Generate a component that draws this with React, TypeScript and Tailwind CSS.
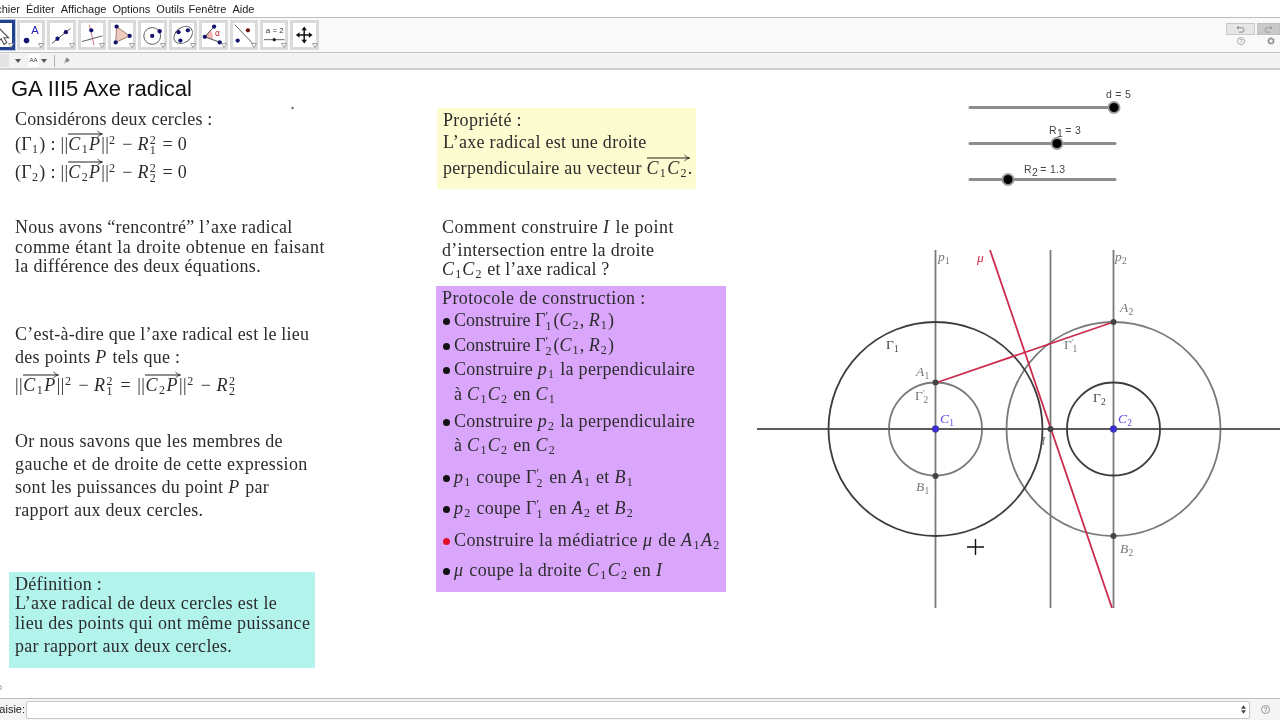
import React from "react";

const T = ({ c, children }: { c: string; children: React.ReactNode }) => (
  <p className={"absolute whitespace-nowrap leading-[20px] " + c}>{children}</p>
);
const I = ({ children }: { children: React.ReactNode }) => <i className="mr-[1px]">{children}</i>;
const Sb = ({ children }: { children: React.ReactNode }) => <sub className="text-[12px] not-italic -bottom-[3px] mr-[1px]">{children}</sub>;
const Stack = ({ top, n }: { top: string; n: string }) => (
  <span className="relative inline-block w-[8px] h-[1px]">
    <span className="absolute left-0 -top-[13px] text-[12px] leading-[9px]">{top}</span>
    <span className="absolute left-0 -top-[3px] text-[12px] leading-[9px]">{n}</span>
  </span>
);
const Vec = ({ children }: { children: React.ReactNode }) => (
  <span className="relative inline-block">
    {children}
    <svg className="absolute left-0 -top-[4px] w-[calc(100%+1px)] h-[8px] overflow-visible" aria-hidden="true">
      <line x1="0" y1="4" x2="100%" y2="4" stroke="#222" strokeWidth="1" />
    </svg>
    <svg className="absolute -right-[2px] -top-[4px] w-[6px] h-[8px]" viewBox="0 0 6 8" aria-hidden="true">
      <path d="M0.5 1 Q2.5 3.5 5.5 4 Q2.5 4.5 0.5 7" fill="none" stroke="#222" strokeWidth="0.9" />
    </svg>
  </span>
);
const Dot = ({ red }: { red?: boolean }) => (
  <span className={"inline-block w-[7px] h-[7px] rounded-full ml-[1px] mr-[4px] align-[1px] " + (red ? "bg-[#e0102a]" : "bg-[#111111]")} />
);
const C1 = () => <><I>C</I><Sb>1</Sb></>;
const C2 = () => <><I>C</I><Sb>2</Sb></>;
const Sq = () => <sup className="text-[12px] mr-[2px]">2</sup>;

const Icon = ({ children, selected }: { children: React.ReactNode; selected?: boolean }) => (
  <div className={"relative shrink-0 w-[28.4px] h-[30px] mr-[2px] border-[3px] " + (selected ? "bg-white border-[#23408f] outline outline-1 outline-[#b8c6e4]" : "bg-white border-[#dadada]")}>
    <svg viewBox="0 0 24 24" className="w-full h-full">{children}</svg>
    <svg viewBox="0 0 6 5" className="absolute right-[-2px] bottom-[-1px] w-[6px] h-[5px]">
      <path d="M0.5 0.5H5.5L3 4.5Z" fill="#ffffff" stroke="#8a8a8a" strokeWidth="0.8" />
    </svg>
  </div>
);
const P = ({ x, y, r = 2.3, f = "#14146e" }: { x: number; y: number; r?: number; f?: string }) => <circle cx={x} cy={y} r={r} fill={f} />;

const Toolbar = () => (
  <div className="flex items-center h-[35px] bg-[#f9f9f9] border-b border-[#c4c4c4] -ml-[13.5px] pr-0 shrink-0">
    <Icon selected>
      <path d="M8 3 L8 20 L12 16 L15 22 L18 20 L15 15 L20 15 Z" fill="#fff" stroke="#555" strokeWidth="1.2" />
    </Icon>
    <Icon>
      <P x={7} y={18} r={3} />
      <text x={12} y={11} fontSize="12" fontFamily="Liberation Sans" fill="#2424b4">A</text>
    </Icon>
    <Icon>
      <line x1="2" y1="21" x2="22" y2="5" stroke="#444" strokeWidth="1" />
      <P x={8} y={16} />
      <P x={17} y={9} />
    </Icon>
    <Icon>
      <line x1="9" y1="1" x2="14" y2="23" stroke="#d06a7a" strokeWidth="1" />
      <line x1="1" y1="19" x2="23" y2="13" stroke="#555" strokeWidth="1" />
      <P x={11} y={7} />
    </Icon>
    <Icon>
      <path d="M6 3 L20 13 L5 20 Z" fill="#eccabd" stroke="#8a5a50" strokeWidth="0.8" />
      <P x={6} y={3} />
      <P x={20} y={13} />
      <P x={5} y={20} />
    </Icon>
    <Icon>
      <circle cx="12" cy="13" r="9" fill="none" stroke="#555" strokeWidth="1" />
      <P x={12} y={13} />
      <P x={20} y={8} />
    </Icon>
    <Icon>
      <ellipse cx="12" cy="12" rx="11" ry="8" transform="rotate(-38 12 12)" fill="none" stroke="#555" strokeWidth="1" />
      <P x={7} y={9} />
      <P x={17} y={7} />
      <P x={9} y={18} />
    </Icon>
    <Icon>
      <path d="M3 14 L9 7 Q13 11 11 17 Z" fill="#f3b4b4" />
      <line x1="3" y1="14" x2="13" y2="3" stroke="#444" strokeWidth="1" />
      <line x1="3" y1="14" x2="20" y2="20" stroke="#444" strokeWidth="1" />
      <P x={3} y={14} />
      <P x={13} y={3} />
      <P x={19} y={20} />
      <text x={14} y={13} fontSize="9" fontFamily="Liberation Sans" fill="#c02020">α</text>
    </Icon>
    <Icon>
      <line x1="2" y1="1" x2="23" y2="23" stroke="#555" strokeWidth="1" />
      <P x={5} y={18} />
      <P x={16} y={7} f="#701010" />
    </Icon>
    <Icon>
      <text x={3} y={10} fontSize="8.5" fontFamily="Liberation Sans" fill="#333">a = 2</text>
      <line x1="1" y1="17" x2="23" y2="17" stroke="#555" strokeWidth="1" />
      <P x={12} y={17} r={1.8} f="#222" />
    </Icon>
    <Icon>
      <path d="M12 3 L15 7 H12.8 V11.2 H17 V9 L21 12 L17 15 V12.8 H12.8 V17 H15 L12 21 L9 17 H11.2 V12.8 H7 V15 L3 12 L7 9 V11.2 H11.2 V7 H9 Z" fill="#111" />
    </Icon>
    <div className="flex-1" />
    <div className="w-[29px] h-[12px] mr-[2px] -mt-[12px] bg-[#e6e6e6] border border-[#c8c8c8] flex items-center justify-center">
      <svg viewBox="0 0 10 8" className="w-[9px] h-[7px]"><path d="M1 2H7Q9 2 9 4.5T7 7H3M1 2L3 0.5M1 2L3 3.5" fill="none" stroke="#666" strokeWidth="0.8" /></svg>
    </div>
    <div className="w-[23px] h-[12px] -mt-[12px] bg-[#c9c9c9] border border-[#c0c0c0] flex items-center justify-center">
      <svg viewBox="0 0 10 8" className="w-[9px] h-[7px]"><path d="M9 2H3Q1 2 1 4.5T3 7H7M9 2L7 0.5M9 2L7 3.5" fill="none" stroke="#888" strokeWidth="0.8" /></svg>
    </div>
  </div>
);

const Graph = () => {
  const serif = "Liberation Serif";
  const lab = (x: number, y: number, name: string, sub: string | null, fill: string, italic = true, prime = false, size = 13.5) => (
    <text x={x} y={y} fill={fill} fontFamily={serif} fontSize={size} fontStyle={italic ? "italic" : "normal"}>
      {name}
      {prime ? <tspan fontSize="9" dy="-4">′</tspan> : null}
      {sub ? <tspan fontSize="9.5" dy={prime ? 7 : 3} dx={prime ? -2 : 0} fontStyle="normal">{sub}</tspan> : null}
    </text>
  );
  return (
    <svg className="absolute left-0 top-0 w-[1280px] h-[628px]" viewBox="0 70 1280 628">
      <g strokeLinecap="round" strokeWidth="3" stroke="#8c8c8c">
        <line x1="970" y1="107.5" x2="1114" y2="107.5" />
        <line x1="970" y1="143.5" x2="1115" y2="143.5" />
        <line x1="970" y1="179.5" x2="1115" y2="179.5" />
      </g>
      {[[1114, 107.5], [1057, 143.5], [1008, 179.5]].map(([x, y]) => (
        <g key={x}>
          <circle cx={x} cy={y} r="6.5" fill="#9a9a9a" />
          <circle cx={x} cy={y} r="4.6" fill="#000" />
        </g>
      ))}
      <g fontFamily="Liberation Sans" fontSize="10.5" fill="#444">
        <text x="1106" y="98">d = 5</text>
        <text x="1049" y="134">R<tspan dy="3">1</tspan><tspan dy="-3" dx="-1"> = 3</tspan></text>
        <text x="1024" y="173">R<tspan dy="3">2</tspan><tspan dy="-3" dx="-1"> = 1.3</tspan></text>
      </g>
      <circle cx="292.5" cy="108" r="1.2" fill="#666" />

      <g stroke="#7a7a7a" strokeWidth="1.8" fill="none">
        <line x1="935.5" y1="250" x2="935.5" y2="608" />
        <line x1="1050.5" y1="250" x2="1050.5" y2="608" />
        <line x1="1113.5" y1="250" x2="1113.5" y2="608" />
        <circle cx="935.5" cy="429" r="46.5" />
        <circle cx="1113.5" cy="429" r="107" />
      </g>
      <line x1="757" y1="429" x2="1280" y2="429" stroke="#5c5c5c" strokeWidth="1.8" />
      <g stroke="#3c3c3c" strokeWidth="1.8" fill="none">
        <circle cx="935.5" cy="429" r="107" />
        <circle cx="1113.5" cy="429" r="46.5" />
      </g>
      <g stroke="#cc2b4b" strokeWidth="1.8">
        <line x1="935.5" y1="383" x2="1113.5" y2="322" />
        <line x1="990" y1="250" x2="1112" y2="608" />
      </g>
      {[[935.5, 382.5], [935.5, 476], [1113.5, 322], [1113.5, 536], [1050.5, 429]].map(([x, y]) => (
        <circle key={x + "-" + y} cx={x} cy={y} r="3" fill="#444" />
      ))}
      <circle cx="935.5" cy="429" r="3.4" fill="#3a2fe0" stroke="#444" strokeWidth="0.5" />
      <circle cx="1113.5" cy="429" r="3.4" fill="#3a2fe0" stroke="#444" strokeWidth="0.5" />
      <path d="M967 547H984M975.5 539V555" stroke="#111" strokeWidth="1.4" />

      {lab(938, 261, "p", "1", "#777")}
      {lab(977, 262, "μ", null, "#cc2b4b")}
      {lab(1115, 261, "p", "2", "#777")}
      {lab(1120, 312, "A", "2", "#777")}
      {lab(886, 349, "Γ", "1", "#444", false)}
      {lab(1064, 349, "Γ", "1", "#777", false, true)}
      {lab(916, 376, "A", "1", "#777")}
      {lab(915, 400, "Γ", "2", "#777", false, true)}
      {lab(940, 423, "C", "1", "#5a4de8")}
      {lab(1093, 402, "Γ", "2", "#444", false)}
      {lab(1118, 423, "C", "2", "#5a4de8")}
      {lab(1041, 445, "I", null, "#777")}
      {lab(916, 491, "B", "1", "#777")}
      {lab(1120, 553, "B", "2", "#777")}
    </svg>
  );
};

export default function App() {
  return (
    <div className="w-[1280px] h-[720px] overflow-hidden flex flex-col bg-white blur-[0.35px] font-['Liberation_Sans',sans-serif] text-[#222222]">
      <div className="h-[18px] shrink-0 flex items-center gap-[6px] pt-[2px] -ml-[13px] text-[11px] text-[#222] border-b border-[#bdbdbd]">
        <span>Fichier</span>
        <span>Éditer</span>
        <span>Affichage</span>
        <span>Options</span>
        <span>Outils</span>
        <span className="-ml-[2px]">Fenêtre</span>
        <span>Aide</span>
      </div>
      <Toolbar />
      <div className="relative h-[17px] shrink-0 bg-[#f3f3f3] border-b-2 border-[#cfcfcf] flex items-center">
        <div className="w-[9px] h-[13px] bg-[#e4e4e4]" />
        <svg viewBox="0 0 6 4" className="w-[6px] h-[4px] ml-[6px]"><path d="M0 0H6L3 4Z" fill="#555" /></svg>
        <span className="ml-[7px] w-[11px] h-[13px] bg-white text-[6px] leading-[13px] text-center text-[#333]">AA</span>
        <svg viewBox="0 0 6 4" className="w-[6px] h-[4px] ml-[2px]"><path d="M0 0H6L3 4Z" fill="#555" /></svg>
        <span className="ml-[7px] w-px h-[12px] bg-[#b0b0b0]" />
        <svg viewBox="0 0 10 10" className="w-[9px] h-[9px] ml-[7px]"><path d="M5 1L9 5L7.5 5.5L5.5 7.5L5 6.5L1.5 9L4 5.5L3 5L5 2.5Z" fill="#8a8a8a" /></svg>
      </div>
      <div className="absolute left-[1237px] top-[37px] w-[8px] h-[8px] rounded-full border border-[#aaaaaa] text-[6px] leading-[6px] text-center text-[#888]">?</div>
      <svg viewBox="0 0 10 10" className="absolute left-[1267px] top-[37px] w-[8px] h-[8px]">
        <circle cx="5" cy="5" r="3" fill="none" stroke="#888" strokeWidth="1.6" />
        <circle cx="5" cy="5" r="4.4" fill="none" stroke="#888" strokeWidth="1" strokeDasharray="1.4 2" />
      </svg>

      <main className="relative flex-1 overflow-hidden bg-white font-['Liberation_Serif',serif] text-[18px] tracking-[0.3px] text-[#2c2c2c]">
        <div className="absolute left-[437px] top-[38px] w-[259px] h-[81px] bg-[#fdfbd0]" />
        <div className="absolute left-[436px] top-[216px] w-[290px] h-[306px] bg-[#d9a6fb]" />
        <div className="absolute left-[9px] top-[502px] w-[306px] h-[96px] bg-[#b2f3ec]" />
        <div className="absolute -left-[3px] top-[615px] w-[5px] h-[5px] rounded-full border border-[#999]" />
        <Graph />

        <h1 className="absolute left-[11px] top-[6px] font-['Liberation_Sans',sans-serif] text-[22px] leading-[26px] tracking-normal text-[#111]">GA III5 Axe radical</h1>

        <T c="left-[15px] top-[39px] tracking-[0.15px]">Considérons deux cercles :</T>
        <T c="left-[15px] top-[64px]">(Γ<Sb>1</Sb>) : ||<Vec><C1 /><I>P</I></Vec>||<Sq /> − <I>R</I><Stack top="2" n="1" /> = 0</T>
        <T c="left-[15px] top-[92px]">(Γ<Sb>2</Sb>) : ||<Vec><C2 /><I>P</I></Vec>||<Sq /> − <I>R</I><Stack top="2" n="2" /> = 0</T>

        <T c="left-[15px] top-[147px]">Nous avons “rencontré” l’axe radical</T>
        <T c="left-[15px] top-[167px] tracking-[0.45px]">comme étant la droite obtenue en faisant</T>
        <T c="left-[15px] top-[186px]">la différence des deux équations.</T>

        <T c="left-[15px] top-[254px] tracking-[0.25px]">C’est-à-dire que l’axe radical est le lieu</T>
        <T c="left-[15px] top-[277px]">des points <I>P</I> tels que :</T>
        <T c="left-[15px] top-[305px] tracking-[0.5px]">||<Vec><C1 /><I>P</I></Vec>||<Sq /> − <I>R</I><Stack top="2" n="1" /> <span className="mx-[1px]">=</span> ||<Vec><C2 /><I>P</I></Vec>||<Sq /> − <I>R</I><Stack top="2" n="2" /></T>

        <T c="left-[15px] top-[361px]">Or nous savons que les membres de</T>
        <T c="left-[15px] top-[384px] tracking-[0.38px]">gauche et de droite de cette expression</T>
        <T c="left-[15px] top-[407px]">sont les puissances du point <I>P</I> par</T>
        <T c="left-[15px] top-[430px]">rapport aux deux cercles.</T>

        <T c="left-[15px] top-[504px]">Définition :</T>
        <T c="left-[15px] top-[523px]">L’axe radical de deux cercles est le</T>
        <T c="left-[15px] top-[543px] tracking-[0.35px]">lieu des points qui ont même puissance</T>
        <T c="left-[15px] top-[566px]">par rapport aux deux cercles.</T>

        <T c="left-[443px] top-[40px]">Propriété :</T>
        <T c="left-[443px] top-[62px]">L’axe radical est une droite</T>
        <T c="left-[443px] top-[88px]">perpendiculaire au vecteur <Vec><C1 /><C2 /></Vec>.</T>

        <T c="left-[442px] top-[147px] tracking-[0.48px]">Comment construire <I>I</I> le point</T>
        <T c="left-[442px] top-[170px]">d’intersection entre la droite</T>
        <T c="left-[442px] top-[189px] tracking-[0.15px]"><C1 /><C2 /> et l’axe radical ?</T>

        <T c="left-[442px] top-[218px] tracking-[0.38px]">Protocole de construction :</T>
        <T c="left-[442px] top-[240px] tracking-[0.05px]"><Dot />Construire Γ<Stack top="′" n="1" />(<C2 />, <I>R</I><Sb>1</Sb>)</T>
        <T c="left-[442px] top-[265px] tracking-[0.05px]"><Dot />Construire Γ<Stack top="′" n="2" />(<C1 />, <I>R</I><Sb>2</Sb>)</T>
        <T c="left-[442px] top-[289px]"><Dot />Construire <I>p</I><Sb>1</Sb> la perpendiculaire</T>
        <T c="left-[454px] top-[314px]">à <C1 /><C2 /> en <C1 /></T>
        <T c="left-[442px] top-[341px]"><Dot />Construire <I>p</I><Sb>2</Sb> la perpendiculaire</T>
        <T c="left-[454px] top-[365px]">à <C1 /><C2 /> en <C2 /></T>
        <T c="left-[442px] top-[397px]"><Dot /><I>p</I><Sb>1</Sb> coupe Γ<Stack top="′" n="2" /> en <I>A</I><Sb>1</Sb> et <I>B</I><Sb>1</Sb></T>
        <T c="left-[442px] top-[428px]"><Dot /><I>p</I><Sb>2</Sb> coupe Γ<Stack top="′" n="1" /> en <I>A</I><Sb>2</Sb> et <I>B</I><Sb>2</Sb></T>
        <T c="left-[442px] top-[460px] tracking-[0.42px]"><Dot red />Construire la médiatrice <I>μ</I> de <I>A</I><Sb>1</Sb><I>A</I><Sb>2</Sb></T>
        <T c="left-[442px] top-[490px] tracking-[0.38px]"><Dot /><I>μ</I> coupe la droite <C1 /><C2 /> en <I>I</I></T>
      </main>

      <div className="h-[22px] shrink-0 bg-[#f4f4f4] border-t border-[#bcbcbc] flex items-center -ml-[8px] text-[11px] text-[#222]">
        <span>Saisie:</span>
        <div className="ml-[1px] w-[1224px] h-[18px] bg-white border border-[#c6c6c6] rounded-[2px] flex items-center justify-end pr-[3px]">
          <svg viewBox="0 0 6 10" className="w-[5px] h-[9px]"><path d="M0 4L3 0L6 4ZM0 6H6L3 10Z" fill="#444" /></svg>
        </div>
        <span className="ml-[11px] w-[9px] h-[9px] rounded-full border border-[#999] text-[7px] leading-[7px] text-center text-[#777]">?</span>
      </div>
    </div>
  );
}
